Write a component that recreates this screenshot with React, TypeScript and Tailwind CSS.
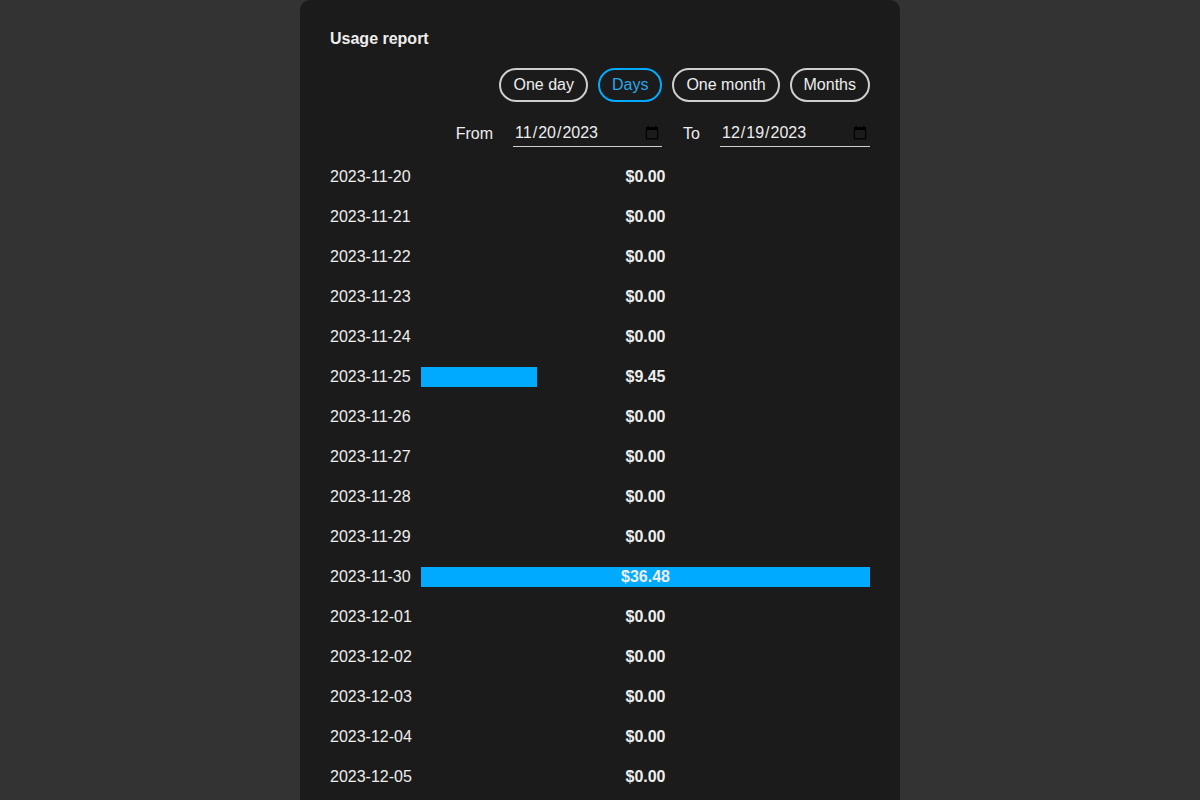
const rows: [string, number][] = [
  ['2023-11-20', 0],
  ['2023-11-21', 0],
  ['2023-11-22', 0],
  ['2023-11-23', 0],
  ['2023-11-24', 0],
  ['2023-11-25', 9.45],
  ['2023-11-26', 0],
  ['2023-11-27', 0],
  ['2023-11-28', 0],
  ['2023-11-29', 0],
  ['2023-11-30', 36.48],
  ['2023-12-01', 0],
  ['2023-12-02', 0],
  ['2023-12-03', 0],
  ['2023-12-04', 0],
  ['2023-12-05', 0],
  ['2023-12-06', 0],
  ['2023-12-07', 0],
];

const ranges = ['One day', 'Days', 'One month', 'Months'];

export default function App() {
  const max = Math.max(...rows.map((r) => r[1]));
  return (
    <div className="h-[800px] overflow-hidden bg-[#333333] flex justify-center text-[#eeeeee] font-['Liberation_Sans',Arial,sans-serif]">
      <div className="w-[600px] bg-[#1b1b1b] rounded-t-[10px] px-[30px] pt-[30px]">
        <h1 className="text-base font-bold leading-[18px]">Usage report</h1>

        <div className="mt-5 flex justify-end gap-[10px]">
          {ranges.map((r) => {
            const active = r === 'Days';
            return (
              <button
                key={r}
                className={
                  'rounded-full border-2 px-[12px] py-[6px] text-base leading-[18px] ' +
                  (active ? 'border-[#00aaff] text-[#2ba6e6]' : 'border-[#cfcfcf] text-[#eeeeee]')
                }
              >
                {r}
              </button>
            );
          })}
        </div>

        <div className="mt-[18px] flex justify-end items-center gap-5 text-base">
          <span>From</span>
          <input
            type="date"
            defaultValue="2023-11-20"
            className="w-[149px] h-[27px] bg-transparent border-b border-[#cfcfcf] text-[#eeeeee] text-base pl-px pr-0 outline-none"
          />
          <span className="ml-px">To</span>
          <input
            type="date"
            defaultValue="2023-12-19"
            className="w-[150px] h-[27px] bg-transparent border-b border-[#cfcfcf] text-[#eeeeee] text-base pl-px pr-0 outline-none"
          />
        </div>

        <div className="mt-[10px]">
          {rows.map(([d, v]) => (
            <div key={d} className="h-10 flex items-center">
              <div className="w-[91px] shrink-0 text-base">{d}</div>
              <div className="flex-1 grid items-center">
                <div className="[grid-area:1/1] h-5">
                  {v > 0 && (
                    <div className="h-5 bg-[#00aaff]" style={{ width: `${(v / max) * 100}%` }} />
                  )}
                </div>
                <div className="[grid-area:1/1] text-center font-bold text-base">${v.toFixed(2)}</div>
              </div>
            </div>
          ))}
        </div>
      </div>
    </div>
  );
}
